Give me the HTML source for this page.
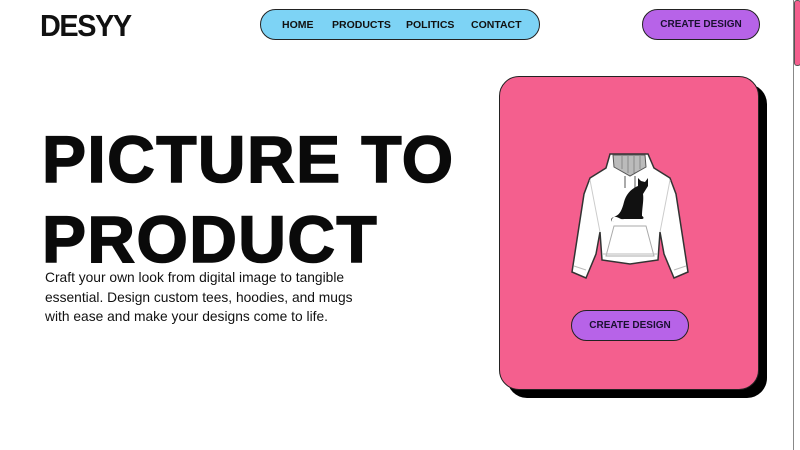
<!DOCTYPE html>
<html><head><style>
body{margin:0;width:800px;height:450px;background:#fff;position:relative;overflow:hidden;font-family:"Liberation Sans",sans-serif;color:#111}
.logo{position:absolute;left:40px;top:8px;font-size:31px;font-weight:bold;letter-spacing:-1.5px;transform:scaleX(0.93);transform-origin:left}
.nav{position:absolute;left:260px;top:9px;width:280px;height:31px;background:#7dd3f5;border:1.5px solid #222;border-radius:16px;box-sizing:border-box;font-size:10.5px;font-weight:bold}
.nav span{position:absolute;top:9px}
.btn{position:absolute;background:#b763e8;border:1.5px solid #222;border-radius:16px;box-sizing:border-box;font-size:10px;font-weight:bold;text-align:center;color:#1a1030}
h1{position:absolute;left:42px;top:119px;margin:0;font-size:66px;line-height:80px;font-weight:900;letter-spacing:1.4px;color:#0a0a0a;-webkit-text-stroke:1.5px #0a0a0a}
p{position:absolute;left:45px;top:268px;margin:0;font-size:13.8px;line-height:19.5px;width:325px}
.shadow{position:absolute;left:507px;top:84px;width:260px;height:314px;background:#000;border-radius:20px}
.card{position:absolute;left:499px;top:76px;width:260px;height:314px;background:#f45f8e;border:1.5px solid #222;border-radius:20px;box-sizing:border-box}
.sb{position:absolute;left:793px;top:0;width:7px;height:450px;border-left:1px solid #888;background:#fff}
.thumb{position:absolute;left:794px;top:0;width:5px;height:64px;background:#f45f8e;border:1px solid #555;border-radius:3px}
</style></head><body>
<div class="logo">DESYY</div>
<div class="nav"><span style="left:21px">HOME</span><span style="left:71px">PRODUCTS</span><span style="left:145px">POLITICS</span><span style="left:210px">CONTACT</span></div>
<div class="btn" style="left:642px;top:9px;width:118px;height:31px;line-height:29px">CREATE DESIGN</div>
<h1>PICTURE TO<br>PRODUCT</h1>
<p>Craft your own look from digital image to tangible essential. Design custom tees, hoodies, and mugs with ease and make your designs come to life.</p>
<div class="shadow"></div>
<div class="card"></div>
<svg style="position:absolute;left:570px;top:150px" width="120" height="130" viewBox="0 0 120 130">
<path d="M40 4 L78 4 L84 18 L100 28 L106 44 L118 122 L104 128 L94 104 L90 82 L88 110 L60 114 L32 110 L30 82 L26 104 L16 128 L2 122 L14 44 L20 28 L36 18 Z" fill="#fff" stroke="#333" stroke-width="1.5"/>
<path d="M20 30 L30 82 M100 30 L90 82" stroke="#ccc" fill="none"/>
<path d="M43 5 L75 5 L76 17 L60 26 L44 17 Z" fill="#bbb" stroke="#555"/>
<path d="M52 5 v14 M58 5 v18 M64 5 v18 M70 5 v14" stroke="#888"/>
<path d="M44 76 L76 76 L84 106 L36 106 Z" fill="none" stroke="#aaa"/>
<path d="M32 104 L88 104 M4 116 L16 120 M104 120 L116 116" stroke="#bbb"/>
<path d="M55 26 v12 M65 26 v12" stroke="#aaa" stroke-width="2"/>
<path d="M44 72 C40 72 40 68 44 67 C48 66 50 70 54 69 L72 69 C74 69 74 67 72 66 C72 58 74 50 73 44 L78 36 L78 28 L75 32 L71 31 L68 28 L68 36 C62 38 56 44 54 52 C52 60 50 64 46 66 C41 68 40 72 44 72 Z" fill="#111"/>
</svg>
<div class="btn" style="left:571px;top:310px;width:118px;height:31px;line-height:29px">CREATE DESIGN</div>
<div class="sb"></div><div class="thumb"></div>
</body></html>
